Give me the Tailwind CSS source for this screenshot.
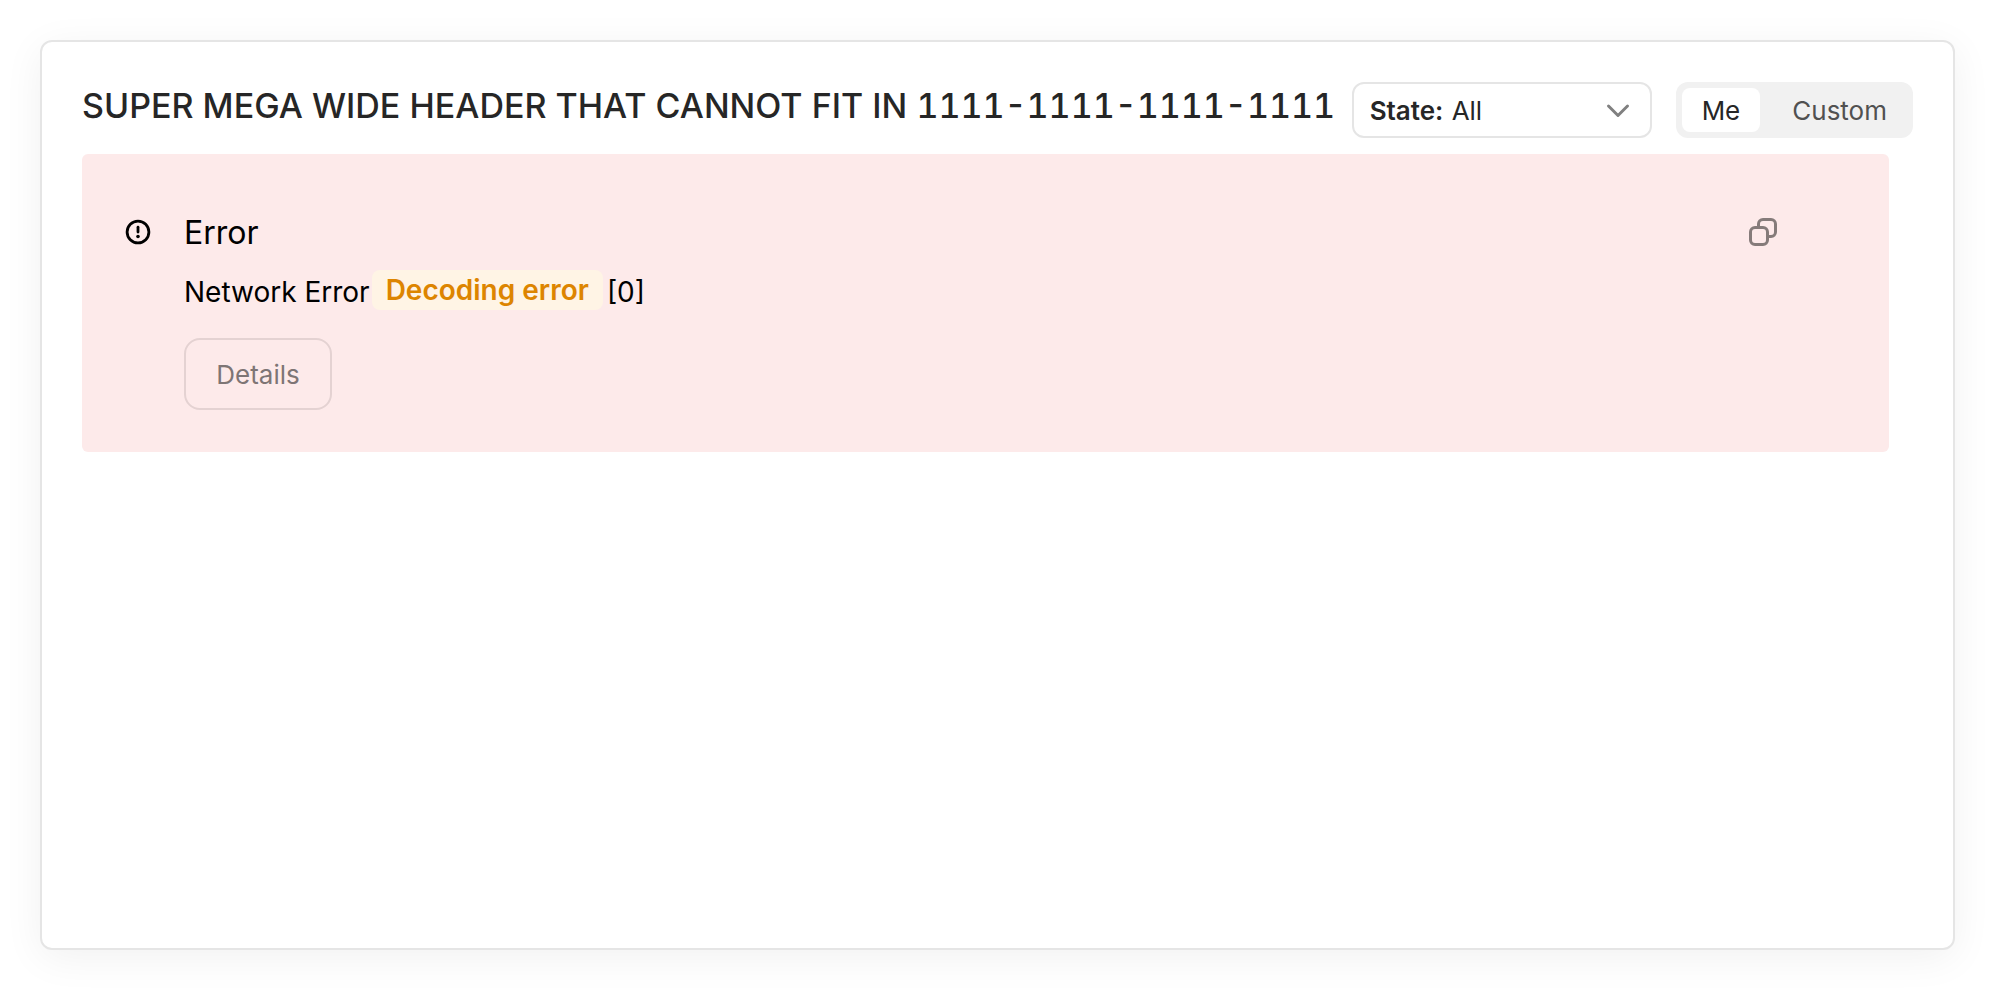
<!DOCTYPE html>
<html lang="en">
<head>
<meta charset="utf-8">
<title>Widget error</title>
<script src="https://cdn.jsdelivr.net/npm/@tailwindcss/browser@4"></script>
</head>
<body class="bg-white font-['Inter',sans-serif] text-[#262626]">
<main class="flex min-h-screen py-10 pr-[41px] pl-10">
  <section class="min-w-0 grow rounded-[12px] border-2 border-[#e5e5e5] bg-white p-10 shadow-[0_8px_40px_rgba(0,0,0,0.06)]">
    <header class="flex items-start">
      <h1 class="min-w-0 grow truncate text-[34px] leading-12 font-[550] tabular-nums">SUPER MEGA WIDE HEADER THAT CANNOT FIT IN 1111-1111-1111-1111</h1>
      <div class="relative h-14 w-75 shrink-0 rounded-xl border-2 border-[#e5e5e5]">
        <label for="state" class="pointer-events-none absolute inset-y-0 left-4 flex items-center text-[26px] font-semibold">State:</label>
        <select id="state" class="size-full appearance-none rounded-xl bg-transparent pr-12 pl-[98px] text-[26px]">
          <option>All</option>
        </select>
        <svg class="pointer-events-none absolute top-4 right-5 h-5 w-6" viewBox="0 0 24 20" fill="none" stroke="#808080" stroke-width="3" stroke-linecap="round" stroke-linejoin="round"><path d="M2.500 6 12 15.500 21.500 6"/></svg>
      </div>
      <div class="ml-6 flex h-14 shrink-0 gap-3 rounded-xl bg-[#f1f1f1] p-1.5 text-[26px]">
        <button type="button" aria-pressed="true" class="rounded-lg bg-white px-5">Me</button>
        <button type="button" aria-pressed="false" class="px-5 text-[#515151]">Custom</button>
      </div>
    </header>
    <article role="alert" class="mt-4 mr-6 flex rounded-md bg-[#fdeaea] pt-14 pr-28 pb-[42px] pl-11 text-black">
      <svg class="mt-2.5 mr-[34px] size-6 shrink-0 overflow-visible" viewBox="0 0 24 24" fill="none" stroke="currentColor"><circle cx="12" cy="12" r="10.900" stroke-width="2.800"/><path d="M12 7.200v4.800" stroke-width="2.800" stroke-linecap="round"/><circle cx="12" cy="16.500" r="1.800" fill="currentColor" stroke="none"/></svg>
      <div class="min-w-0 grow">
        <h2 class="text-[32px] leading-[46px]">Error</h2>
        <p class="mt-3 flex items-center text-[28px] leading-10"><span class="pt-1">Network Error</span><span class="mr-1 ml-0.5 rounded-lg bg-[#fff4e5] px-3.5 font-semibold text-[#dd8500]">Decoding error</span><span class="pt-1">[0]</span></p>
        <button type="button" class="mt-[26px] h-18 w-37 rounded-2xl border-2 border-[#e4d2d2] text-[26px] text-[#7e7575]">Details</button>
      </div>
      <button type="button" aria-label="Copy" class="mt-2 size-7 shrink-0">
        <svg class="size-7" viewBox="0 0 28 28" fill="none" stroke="#857b7a" stroke-width="3" stroke-linejoin="round"><rect x="1.500" y="9.500" width="17" height="17" rx="4.500"/><path d="M9.500 9.500V6a4.500 4.500 0 0 1 4.500-4.500h8A4.500 4.500 0 0 1 26.500 6v8a4.500 4.500 0 0 1-4.500 4.500h-3.500"/></svg>
      </button>
    </article>
  </section>
</main>
</body>
</html>
